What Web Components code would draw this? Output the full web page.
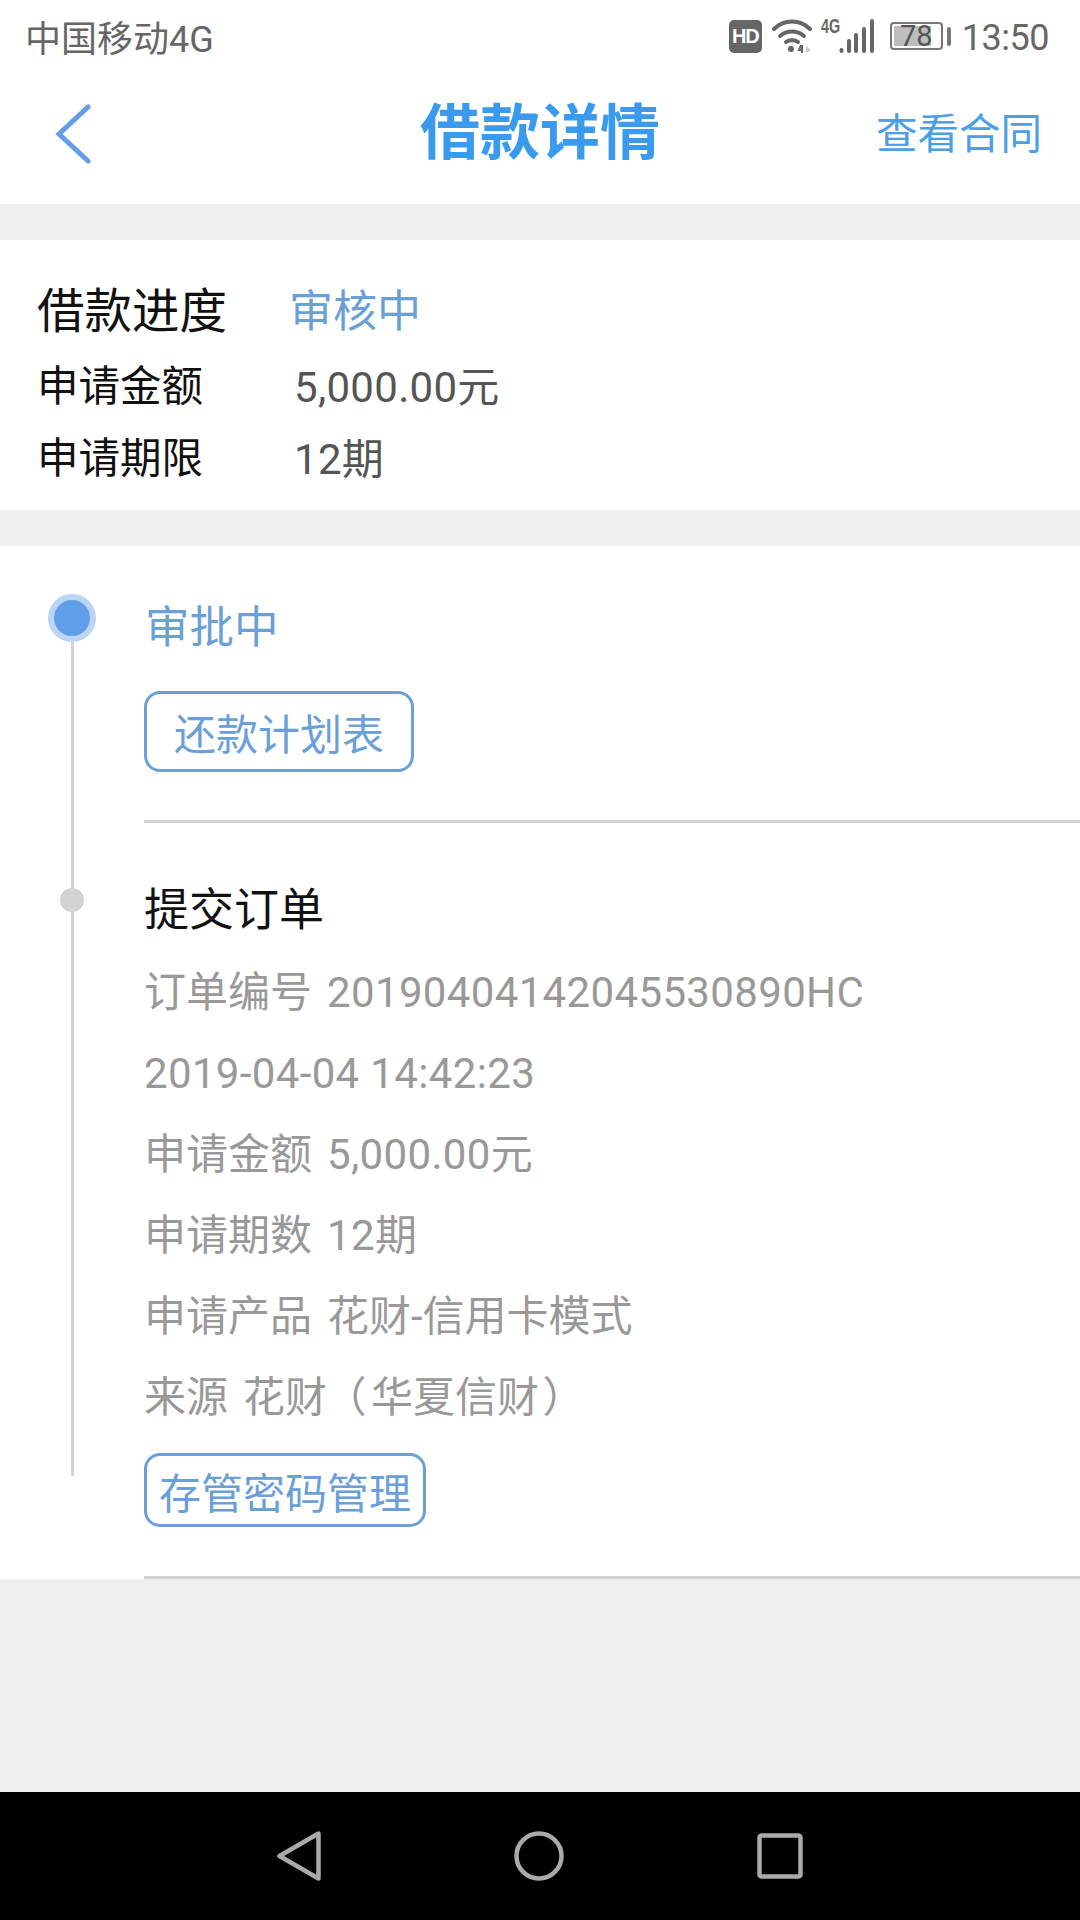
<!DOCTYPE html>
<html lang="zh-CN">
<head>
<meta charset="utf-8">
<title>借款详情</title>
<style>
  html, body { margin: 0; padding: 0; }
  body { width: 1080px; height: 1920px; font-family: Roboto, "Noto Sans CJK SC", sans-serif; background: #efefef; }
  .paren-l, .paren-r { font-feature-settings: "palt"; }
  .paren-l { margin: 0 6px 0 17px; }
  .paren-r { margin-left: 5px; }
</style>
</head>
<body>
<loan-page>
  <status-bar carrier="中国移动4G" battery="78" time="13:50"></status-bar>
  <nav-header title="借款详情" action="查看合同"></nav-header>
  <loan-summary>
    <summary-row slot="rows" label="借款进度" value="审核中" kind="head"></summary-row>
    <summary-row slot="rows" label="申请金额" value="5,000.00元"></summary-row>
    <summary-row slot="rows" label="申请期限" value="12期"></summary-row>
  </loan-summary>
  <loan-timeline>
    <timeline-step active title="审批中">
      <outline-button style="--pad:27px">还款计划表</outline-button>
    </timeline-step>
    <timeline-step title="提交订单">
      <detail-line label="订单编号">20190404142045530890HC</detail-line>
      <detail-line>2019-04-04 14:42:23</detail-line>
      <detail-line label="申请金额">5,000.00元</detail-line>
      <detail-line label="申请期数">12期</detail-line>
      <detail-line label="申请产品" style="letter-spacing:0">花财-信用卡模式</detail-line>
      <detail-line label="来源" style="letter-spacing:0">花财<span class="paren-l">（</span>华夏信财<span class="paren-r">）</span></detail-line>
      <outline-button style="--pad:12px;--h:74px;--top:15px">存管密码管理</outline-button>
    </timeline-step>
  </loan-timeline>
  <system-nav></system-nav>
</loan-page>

<script>
const CJK = 'Roboto, "Noto Sans CJK SC", sans-serif';

class LoanPage extends HTMLElement {
  constructor() {
    super();
    this.attachShadow({ mode: "open" });
    this.shadowRoot.innerHTML = `
      <style>
        :host { display: flex; flex-direction: column; width: 1080px; height: 1920px; background: #efefef; font-family: ${CJK}; }
        ::slotted(loan-timeline) { flex: 1; }
      </style>
      <slot></slot>
    `;
  }
}

class StatusBar extends HTMLElement {
  constructor() {
    super();
    this.attachShadow({ mode: "open" });
  }

  connectedCallback() {
    this.shadowRoot.innerHTML = `
      <style>
        :host { display: flex; align-items: center; height: 72px; padding: 0 31px 0 25px; background: #fff; color: #666; }
        .carrier { font-size: 36px; flex: 1; }
        .hd { width: 33px; height: 33px; border-radius: 5px; background: #666; color: #fff; font: 700 20px/33px "Liberation Sans", sans-serif; text-align: center; letter-spacing: -1px; }
        .wifi { margin-left: 10px; display: block; }
        .net { position: relative; width: 53px; height: 34px; margin-left: 9px; }
        .net b { position: absolute; left: 0; top: -3px; font: 700 20px/20px "Liberation Sans", sans-serif; transform: scaleX(.72); transform-origin: 0 0; }
        .net svg { position: absolute; left: 0; top: 0; }
        .bat { display: flex; align-items: center; margin-left: 16px; }
        .cell { box-sizing: border-box; position: relative; width: 53px; height: 28px; border: 2px solid #777; border-radius: 4px; font-size: 29px; line-height: 24px; text-align: center; color: #555; }
        .cell i { position: absolute; left: 2px; top: 2px; bottom: 2px; width: 37px; background: #bdbdbd; }
        .cell span { position: relative; }
        .nub { width: 4px; height: 19px; margin-left: 4px; background: #777; border-radius: 2px; }
        .time { font-size: 36px; letter-spacing: -.5px; margin-left: 11px; padding-top: 3px; }
      </style>
      <div class="carrier">${this.getAttribute("carrier")}</div>
      <div class="hd">HD</div>
      <svg class="wifi" width="40" height="34" viewBox="0 0 40 34" fill="none" stroke="#666" stroke-width="4" stroke-linecap="round">
        <path d="M2 10C12 0 28 0 38 10"/>
        <path d="M8 17C15 11 25 11 32 17"/>
        <path d="M14 23C17 20.500 23 20.500 26 23"/>
        <circle cx="19" cy="30" r="3" fill="#666" stroke="none"/>
        <path d="M29 26L27 31H31M30 26V34" stroke-width="2" stroke-linecap="butt"/>
        <path d="M34 27L39 31L34 34Z" fill="#ccc" stroke="none"/>
      </svg>
      <div class="net">
        <b>4G</b>
        <svg width="53" height="34" viewBox="0 0 53 34" fill="none" stroke="#666" stroke-width="4" stroke-linecap="round">
          <path d="M20.500 31V32M28 22V32M35 16V32M43 10V32M51 2V32"/>
        </svg>
      </div>
      <div class="bat">
        <div class="cell"><i></i><span>${this.getAttribute("battery")}</span></div>
        <div class="nub"></div>
      </div>
      <div class="time">${this.getAttribute("time")}</div>
    `;
  }
}

class NavHeader extends HTMLElement {
  constructor() {
    super();
    this.attachShadow({ mode: "open" });
  }

  connectedCallback() {
    this.shadowRoot.innerHTML = `
      <style>
        :host { box-sizing: border-box; display: grid; grid-template-columns: 1fr auto 1fr; align-items: center; height: 132px; padding: 0 38px 8px; background: #fff; }
        svg { display: block; margin-left: 17px; }
        h1 { margin: 0 0 14px; font-size: 60px; font-weight: 700; color: #3a9bee; }
        a { justify-self: end; margin-bottom: 7px; font-size: 41.500px; color: #4a9fe6; }
      </style>
      <svg width="36" height="60" viewBox="0 0 36 60" fill="none" stroke="#629de6" stroke-width="5" stroke-linecap="round" stroke-linejoin="miter">
        <path d="M33 3L4 30L33 57"/>
      </svg>
      <h1>${this.getAttribute("title")}</h1>
      <a>${this.getAttribute("action")}</a>
    `;
  }
}

class LoanSummary extends HTMLElement {
  constructor() {
    super();
    this.attachShadow({ mode: "open" });
    this.shadowRoot.innerHTML = `
      <style>
        :host { display: block; margin: 36px 0; padding: 36px 0 18px; background: #fff; }
      </style>
      <slot name="rows"></slot>
    `;
  }
}

class SummaryRow extends HTMLElement {
  constructor() {
    super();
    this.attachShadow({ mode: "open" });
  }

  connectedCallback() {
    const head = this.getAttribute("kind") === "head";
    this.shadowRoot.innerHTML = `
      <style>
        :host { display: flex; align-items: center; height: 72px; padding-left: 37px; }
        .label { width: ${head ? 252 : 257}px; font-size: ${head ? 47.5 : 41.5}px; color: #111; margin-bottom: ${head ? 10 : 2}px; }
        .value { font-size: ${head ? 44 : 42}px; letter-spacing: ${head ? 0 : .3}px; color: ${head ? "#6a9fd8" : "#555"}; margin-bottom: ${head ? 9 : 2}px; }
      </style>
      <div class="label">${this.getAttribute("label")}</div>
      <div class="value">${this.getAttribute("value")}</div>
    `;
  }
}

class LoanTimeline extends HTMLElement {
  constructor() {
    super();
    this.attachShadow({ mode: "open" });
    this.shadowRoot.innerHTML = `
      <style>
        :host { display: block; }
        .card { background: #fff; }
      </style>
      <div class="card"><slot></slot></div>
    `;
  }
}

class TimelineStep extends HTMLElement {
  constructor() {
    super();
    this.attachShadow({ mode: "open" });
  }

  connectedCallback() {
    const active = this.hasAttribute("active");
    this.shadowRoot.innerHTML = `
      <style>
        :host { display: grid; grid-template-columns: 144px 1fr; }
        .rail { display: flex; flex-direction: column; align-items: center; margin-bottom: ${active ? 0 : 103}px; width: 144px; }
        .up { width: 3px; height: ${active ? 48 : 65}px; background: ${active ? "transparent" : "#d3d3d3"}; }
        .dot { box-sizing: border-box; border-radius: 50%; flex: none; }
        .dot.on { width: 48px; height: 48px; background: #5f9fea; border: 6px solid #bcd5f5; }
        .dot.off { width: 24px; height: 24px; background: #d3d3d3; }
        .down { width: 3px; flex: 1; background: #d3d3d3; }
        .body { border-bottom: 3px solid #d3d3d3; padding-bottom: ${active ? 48 : 49}px; padding-top: ${active ? 54 : 60}px; }
        h2 { margin: 0 0 ${active ? 35 : 13}px; padding-left: ${active ? 1 : 0}px; font-size: ${active ? 44.5 : 45}px; line-height: 56px; font-weight: 400; color: ${active ? "#6a9fd8" : "#111"}; }
      </style>
      <div class="rail">
        <div class="up"></div>
        <div class="dot ${active ? "on" : "off"}"></div>
        <div class="down"></div>
      </div>
      <div class="body">
        <h2>${this.getAttribute("title")}</h2>
        <slot></slot>
      </div>
    `;
  }
}

class DetailLine extends HTMLElement {
  constructor() {
    super();
    this.attachShadow({ mode: "open" });
  }

  connectedCallback() {
    const label = this.getAttribute("label");
    this.shadowRoot.innerHTML = `
      <style>
        :host { display: flex; align-items: baseline; gap: 15px; height: 81px; line-height: 81px; font-size: 42px; letter-spacing: .35px; color: #999; white-space: nowrap; }
        span { letter-spacing: 0; }
      </style>
      ${label ? `<span>${label}</span>` : ""}
      <div><slot></slot></div>
    `;
  }
}

class OutlineButton extends HTMLElement {
  constructor() {
    super();
    this.attachShadow({ mode: "open" });
    this.shadowRoot.innerHTML = `
      <style>
        :host { display: block; width: max-content; margin-top: var(--top, 0); }
        div { box-sizing: border-box; height: var(--h, 81px); display: flex; align-items: center; padding: 0 var(--pad, 28px); border: 3px solid #6a9fd8; border-radius: 16px; font-size: 42px; color: #6a9fd8; background: #fff; }
      </style>
      <div><slot></slot></div>
    `;
  }
}

class SystemNav extends HTMLElement {
  constructor() {
    super();
    this.attachShadow({ mode: "open" });
    this.shadowRoot.innerHTML = `
      <style>
        :host { display: flex; align-items: center; justify-content: center; height: 128px; background: #000; gap: 193px; }
        svg { display: block; }
      </style>
      <svg width="44" height="50" viewBox="0 0 44 50" fill="none" stroke="#aaa" stroke-width="4.500" stroke-linejoin="round">
        <path d="M41.500 2.500V47.500L2.500 25Z"/>
      </svg>
      <svg width="50" height="50" viewBox="0 0 50 50" fill="none" stroke="#aaa" stroke-width="4.500"><circle cx="25" cy="25" r="22.500"/></svg>
      <svg width="46" height="46" viewBox="0 0 46 46" fill="none" stroke="#aaa" stroke-width="4.500" stroke-linejoin="round">
        <rect x="2.500" y="2.500" width="41" height="41" rx="2"/>
      </svg>
    `;
  }
}

customElements.define("loan-page", LoanPage);
customElements.define("status-bar", StatusBar);
customElements.define("nav-header", NavHeader);
customElements.define("loan-summary", LoanSummary);
customElements.define("summary-row", SummaryRow);
customElements.define("loan-timeline", LoanTimeline);
customElements.define("timeline-step", TimelineStep);
customElements.define("detail-line", DetailLine);
customElements.define("outline-button", OutlineButton);
customElements.define("system-nav", SystemNav);
</script>
</body>
</html>
